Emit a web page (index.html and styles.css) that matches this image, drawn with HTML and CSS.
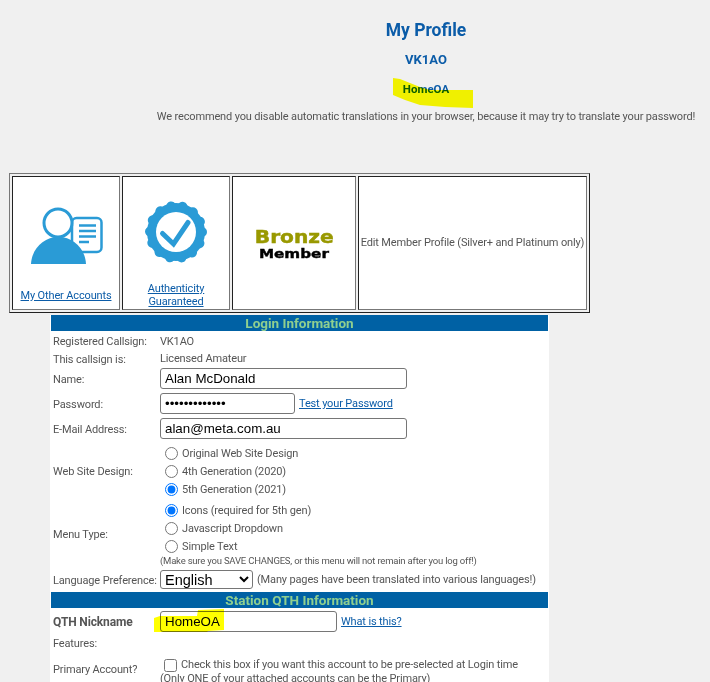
FILE: index.html
```html
<!DOCTYPE html>
<html lang="en">
<head>
<meta charset="utf-8">
<title>My Profile</title>
<link rel="stylesheet" href="styles.css">
</head>
<body>
<header class="head">
  <h1>My Profile</h1>
  <h2>VK1AO</h2>
  <h3>HomeOA</h3>
  <p>We recommend you disable automatic translations in your browser, because it may try to translate your password!</p>
</header>
<svg class="marker" width="710" height="682" viewBox="0 0 710 682" aria-hidden="true">
  <path d="M393 78 L400 79 L410 83 L420 87 L430 90 L473 90 L473 108 L445 107 L420 105 L405 100 L393 95 Z"/>
  <path d="M154 618 L160 616 L197 616 L198 610 L224 609 L224 630 L208 631 L207 632 L154 632 Z"/>
</svg>
<div class="tiles">
  <a class="tile tile-a" href="#">
    <svg class="icon-person" width="72" height="60" viewBox="0 0 72 60" aria-hidden="true">
      <rect x="41" y="12" width="29.500" height="34" rx="4.500" class="ln"/>
      <path d="M48 19.500H65M48 25H65M48 30.500H65M48 36H58" class="ln"/>
      <circle cx="27" cy="17" r="14" class="head-o"/>
      <path d="M0 58C1 42 13 31 27.500 31C42 31 54 42 55 58Z" class="solid"/>
    </svg>
    <span>My Other Accounts</span>
  </a>
  <a class="tile tile-b" href="#">
    <svg class="icon-badge" width="64" height="64" viewBox="0 0 64 64" aria-hidden="true">
      <circle cx="32" cy="32" r="29" class="solid"/>
      <circle cx="32" cy="32" r="26" class="bumps"/>
      <circle cx="32" cy="32" r="20" class="hole"/>
      <path d="M18.500 33.500L29.500 44L44 22.500" class="tick"/>
    </svg>
    <span>Authenticity<br>Guaranteed</span>
  </a>
  <div class="tile tile-c">
    <div class="rank"><b>Bronze</b><i>Member</i></div>
  </div>
  <div class="tile tile-d">Edit Member Profile (Silver+ and Platinum only)</div>
</div>
<form class="panel">
  <div class="band">Login Information</div>
  <div class="row r20"><label>Registered Callsign:</label><span>VK1AO</span></div>
  <div class="row r15"><label>This callsign is:</label><span>Licensed Amateur</span></div>
  <div class="row r25"><label>Name:</label><input class="f247" type="text" value="Alan McDonald"></div>
  <div class="row r25"><label>Password:</label><input class="f135 pw" type="password" value="abcdefghijklm"><a href="#">Test your Password</a></div>
  <div class="row r25"><label>E-Mail Address:</label><input class="f247" type="text" value="alan@meta.com.au"></div>
  <div class="row r60">
    <label>Web Site Design:</label>
    <div class="opts">
      <div class="opt"><input type="radio" name="d"><span>Original Web Site Design</span></div>
      <div class="opt"><input type="radio" name="d"><span>4th Generation (2020)</span></div>
      <div class="opt"><input type="radio" name="d" checked><span>5th Generation (2021)</span></div>
    </div>
  </div>
  <div class="row r66">
    <label>Menu Type:</label>
    <div class="opts">
      <div class="opt"><input type="radio" name="m" checked><span>Icons (required for 5th gen)</span></div>
      <div class="opt"><input type="radio" name="m"><span>Javascript Dropdown</span></div>
      <div class="opt"><input type="radio" name="m"><span>Simple Text</span></div>
      <small>(Make sure you SAVE CHANGES, or this menu will not remain after you log off!)</small>
    </div>
  </div>
  <div class="row r25">
    <label>Language Preference:</label>
    <select><option>English</option></select>
    <span>(Many pages have been translated into various languages!)</span>
  </div>
  <div class="band">Station QTH Information</div>
  <div class="row r26"><label class="strong">QTH Nickname</label><input class="f177" type="text" value="HomeOA"><a href="#">What is this?</a></div>
  <div class="row r18"><label>Features:</label></div>
  <div class="row r34">
    <label>Primary Account?</label>
    <div class="primary">
      <div class="opt"><input type="checkbox"><span>Check this box if you want this account to be pre-selected at Login time</span></div>
      <div>(Only ONE of your attached accounts can be the Primary)</div>
    </div>
  </div>
</form>
</body>
</html>
```
FILE: styles.css
```css
* { box-sizing: border-box; }
html, body { margin: 0; height: 682px; overflow: hidden; }
body {
  background: #f0f0f0;
  color: #555;
  font: 11px/16px Roboto, Tahoma, sans-serif;
  letter-spacing: -0.145px;
  position: relative;
}
a { color: #0b5ca8; }

.head { margin-left: 156px; width: 540px; height: 173px; padding-top: 20px; text-align: center; }
.head h1 { margin: 0; font-size: 17.500px; line-height: 20px; letter-spacing: 0; color: #0b5ca8; }
.head h2 { margin: 11px 0 0; font-size: 13px; line-height: 18px; letter-spacing: 0; color: #0b5ca8; }
.head h3 { margin: 12px 0 0; font-size: 11.500px; line-height: 16px; letter-spacing: 0; color: #0b5ca8; }
.head p { margin: 12px 0 0; white-space: nowrap; }

.marker { position: absolute; left: 0; top: 0; z-index: 5; pointer-events: none; mix-blend-mode: multiply; }
.marker path { fill: #ffff00; }

.tiles {
  margin-left: 9px;
  width: 581px;
  height: 140px;
  padding: 2px;
  display: flex;
  gap: 2px;
  background: #f0f0f0;
  border: 1px solid;
  border-color: #777 #222 #222 #777;
}
.tile {
  height: 134px;
  background: #fff;
  border: 1px solid;
  border-color: #222 #777 #777 #222;
  text-align: center;
  position: relative;
}
.tile-a { width: 108px; }
.tile-b { width: 108px; }
.tile-c { width: 124px; }
.tile-d { width: 229px; display: flex; align-items: center; justify-content: center; white-space: nowrap; }
a.tile span { position: absolute; left: 0; right: 0; bottom: 1px; line-height: 13px; text-decoration: underline; white-space: nowrap; }
.tile-a span { bottom: 7px !important; }
.icon-person { position: absolute; left: 18px; top: 29px; }
.icon-badge { position: absolute; left: 21px; top: 23px; }
.ln { fill: none; stroke: #2a9bd6; stroke-width: 2.5; }
.head-o { fill: #fff; stroke: #2a9bd6; stroke-width: 3; }
.solid { fill: #2a9bd6; }
.bumps { fill: none; stroke: #2a9bd6; stroke-width: 10; stroke-linecap: round; stroke-dasharray: 0.01 11.66; }
.hole { fill: #fff; }
.tick { fill: none; stroke: #2a9bd6; stroke-width: 5; stroke-linecap: round; stroke-linejoin: miter; }
.rank { height: 100%; padding-top: 3px; display: flex; flex-direction: column; align-items: center; justify-content: center; gap: 2px; font-family: "DejaVu Sans", sans-serif; font-weight: bold; letter-spacing: 0; }
.rank b { font-size: 18px; line-height: 15px; transform: scaleX(1.120); color: #999900; -webkit-text-stroke: .5px #999900; }
.rank i { font-style: normal; font-size: 13px; line-height: 15px; transform: scaleX(1.170); color: #000; -webkit-text-stroke: .4px #000; }

.panel { margin: 2px 0 0 50px; width: 499px; height: 400px; padding: 0 1px; background: #fff; }
.band { height: 16px; background: #0061a4; color: #8fcf8f; font-size: 13.500px; font-weight: bold; line-height: 16px; letter-spacing: 0; text-align: center; }
.row { display: flex; align-items: center; white-space: nowrap; }
.row label { flex: 0 0 109px; padding: 2px 0 0 2px; white-space: nowrap; }
.row label.strong { font-size: 12px; font-weight: bold; }
.row a { margin-left: 4px; padding-top: 1px; }
.row > span { padding-top: 1px; }
.r15 { height: 15px; }
.r18 { height: 18px; }
.r20 { height: 20px; }
.r25 { height: 25px; }
.r26 { height: 26px; }
.r34 { height: 34px; }
.r60 { height: 60px; }
.r66 { height: 66px; }
input[type=text], input[type=password] {
  height: 21px;
  padding: 1px 4px;
  border: 1px solid #767676;
  border-radius: 3px;
  background: #fff;
  font: 13.330px "Liberation Sans", sans-serif;
  letter-spacing: 0;
  color: #000;
}
.f247 { width: 247px; }
.f135 { width: 135px; }
.f177 { width: 177px; }
select {
  flex: none;
  width: 93px;
  height: 19px;
  margin-right: 4px;
  font: 14.500px "Liberation Sans", sans-serif;
  letter-spacing: 0;
  color: #000;
  background: #fff;
  border: 1px solid #767676;
  border-radius: 3px;
}
.opts { display: flex; flex-direction: column; }
.opt { display: flex; align-items: center; height: 18px; }
.opt input { flex: none; width: 13px; height: 13px; margin: 0 4px 0 5px; }
.opts .opt span { padding-top: 2px; }
.opts small { font-size: 9.500px; line-height: 12px; letter-spacing: -0.2px; white-space: nowrap; }
.primary { align-self: flex-start; margin-top: 6px; line-height: 14px; }
.primary .opt { height: 14px; }
.primary .opt input { margin: 0 4px 0 4px; }
```
